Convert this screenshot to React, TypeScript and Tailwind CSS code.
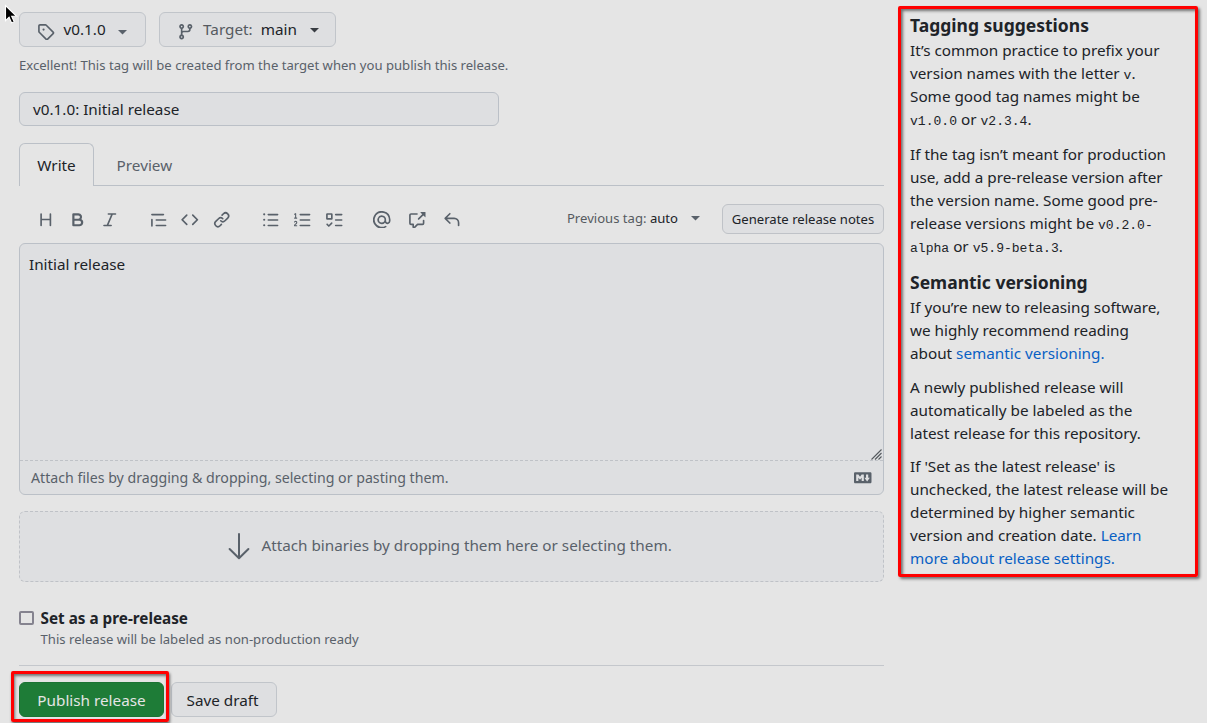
import React from "react";

const ICONS = {
  tag: "M1 7.775V2.75C1 1.784 1.784 1 2.75 1h5.025c.464 0 .91.184 1.238.513l6.25 6.25a1.75 1.75 0 0 1 0 2.474l-5.026 5.026a1.75 1.75 0 0 1-2.474 0l-6.25-6.25A1.752 1.752 0 0 1 1 7.775Zm1.5 0c0 .066.026.13.073.177l6.25 6.25a.25.25 0 0 0 .354 0l5.025-5.025a.25.25 0 0 0 0-.354l-6.25-6.25a.25.25 0 0 0-.177-.073H2.75a.25.25 0 0 0-.25.25ZM6 5a1 1 0 1 1 0 2 1 1 0 0 1 0-2Z",
  branch: "M9.5 3.25a2.25 2.25 0 1 1 3 2.122V6A2.5 2.5 0 0 1 10 8.5H6a1 1 0 0 0-1 1v1.128a2.251 2.251 0 1 1-1.5 0V5.372a2.25 2.25 0 1 1 1.5 0v1.836A2.493 2.493 0 0 1 6 7h4a1 1 0 0 0 1-1v-.628A2.25 2.25 0 0 1 9.5 3.25Zm-6 0a.75.75 0 1 0 1.5 0 .75.75 0 0 0-1.5 0Zm8.25-.75a.75.75 0 1 0 0 1.5.75.75 0 0 0 0-1.5ZM4.25 12a.75.75 0 1 0 0 1.5.75.75 0 0 0 0-1.5Z",
  heading: "M3.75 2a.75.75 0 0 1 .75.75V7h7V2.75a.75.75 0 0 1 1.5 0v10.5a.75.75 0 0 1-1.5 0V8.5h-7v4.75a.75.75 0 0 1-1.5 0V2.75A.75.75 0 0 1 3.75 2Z",
  bold: "M4 2h4.5a3.501 3.501 0 0 1 2.852 5.53A3.499 3.499 0 0 1 9.5 14H4a1 1 0 0 1-1-1V3a1 1 0 0 1 1-1Zm1 7v3h4.5a1.5 1.5 0 0 0 0-3Zm3.5-2a1.5 1.5 0 0 0 0-3H5v3Z",
  italic: "M6 2.75A.75.75 0 0 1 6.75 2h6.5a.75.75 0 0 1 0 1.5h-2.505l-3.858 9H9.25a.75.75 0 0 1 0 1.5h-6.5a.75.75 0 0 1 0-1.5h2.505l3.858-9H6.75A.75.75 0 0 1 6 2.75Z",
  quote: "M1.75 2.5h10.5a.75.75 0 0 1 0 1.5H1.75a.75.75 0 0 1 0-1.5Zm4 5h8.5a.75.75 0 0 1 0 1.5h-8.5a.75.75 0 0 1 0-1.5Zm0 5h8.5a.75.75 0 0 1 0 1.5h-8.5a.75.75 0 0 1 0-1.5ZM2.5 7.75v6a.75.75 0 0 1-1.5 0v-6a.75.75 0 0 1 1.5 0Z",
  code: "m11.28 3.22 4.25 4.25a.75.75 0 0 1 0 1.06l-4.25 4.25a.749.749 0 0 1-1.275-.326.749.749 0 0 1 .215-.734L13.94 8l-3.72-3.72a.749.749 0 0 1 .326-1.275.749.749 0 0 1 .734.215Zm-6.56 0a.751.751 0 0 1 1.042.018.751.751 0 0 1 .018 1.042L2.06 8l3.72 3.72a.749.749 0 0 1-.326 1.275.749.749 0 0 1-.734-.215L.47 8.53a.75.75 0 0 1 0-1.06Z",
  link: "m7.775 3.275 1.25-1.25a3.5 3.5 0 1 1 4.95 4.95l-2.5 2.5a3.5 3.5 0 0 1-4.95 0 .751.751 0 0 1 .018-1.042.751.751 0 0 1 1.042-.018 1.998 1.998 0 0 0 2.83 0l2.5-2.5a2.002 2.002 0 0 0-2.83-2.83l-1.25 1.25a.751.751 0 0 1-1.042-.018.751.751 0 0 1-.018-1.042Zm-4.69 9.64a1.998 1.998 0 0 0 2.83 0l1.25-1.25a.751.751 0 0 1 1.042.018.751.751 0 0 1 .018 1.042l-1.25 1.25a3.5 3.5 0 1 1-4.95-4.95l2.5-2.5a3.5 3.5 0 0 1 4.95 0 .751.751 0 0 1-.018 1.042.751.751 0 0 1-1.042.018 1.998 1.998 0 0 0-2.83 0l-2.5 2.5a1.998 1.998 0 0 0 0 2.83Z",
  ul: "M5.75 2.5h8.5a.75.75 0 0 1 0 1.5h-8.5a.75.75 0 0 1 0-1.5Zm0 5h8.5a.75.75 0 0 1 0 1.5h-8.5a.75.75 0 0 1 0-1.5Zm0 5h8.5a.75.75 0 0 1 0 1.5h-8.5a.75.75 0 0 1 0-1.5ZM2 14a1 1 0 1 1 0-2 1 1 0 0 1 0 2Zm1-6a1 1 0 1 1-2 0 1 1 0 0 1 2 0ZM2 4a1 1 0 1 1 0-2 1 1 0 0 1 0 2Z",
  ol: "M5 3.25a.75.75 0 0 1 .75-.75h8.5a.75.75 0 0 1 0 1.5h-8.5A.75.75 0 0 1 5 3.25Zm0 5a.75.75 0 0 1 .75-.75h8.5a.75.75 0 0 1 0 1.5h-8.5A.75.75 0 0 1 5 8.25Zm0 5a.75.75 0 0 1 .75-.75h8.5a.75.75 0 0 1 0 1.5h-8.5a.75.75 0 0 1-.75-.75ZM.924 10.32a.5.5 0 0 1-.851-.525l.001-.001.001-.002.002-.004.007-.011c.097-.144.215-.273.348-.384.228-.19.588-.392 1.068-.392.468 0 .858.181 1.126.484.259.294.377.673.377 1.038 0 .987-.686 1.495-1.156 1.845l-.047.035c-.303.225-.522.4-.654.597h1.357a.5.5 0 0 1 0 1H.5a.5.5 0 0 1-.5-.5c0-1.005.692-1.52 1.167-1.875l.035-.025c.531-.396.8-.625.8-1.078a.57.57 0 0 0-.128-.376C1.806 10.068 1.695 10 1.5 10a.658.658 0 0 0-.429.163.835.835 0 0 0-.144.153ZM2.003 2.5V6h.503a.5.5 0 0 1 0 1H.5a.5.5 0 0 1 0-1h.503V3.308l-.28.14a.5.5 0 0 1-.446-.895l1.003-.5a.5.5 0 0 1 .723.447Z",
  tasks: "M2 2h4a1 1 0 0 1 1 1v4a1 1 0 0 1-1 1H2a1 1 0 0 1-1-1V3a1 1 0 0 1 1-1Zm4.655 8.595a.75.75 0 0 1 0 1.06L4.03 14.28a.75.75 0 0 1-1.06 0l-1.5-1.5a.749.749 0 0 1 .326-1.275.749.749 0 0 1 .734.215l.97.97 2.095-2.095a.75.75 0 0 1 1.06 0ZM9.75 2.5h5.5a.75.75 0 0 1 0 1.5h-5.5a.75.75 0 0 1 0-1.5Zm0 5h5.5a.75.75 0 0 1 0 1.5h-5.5a.75.75 0 0 1 0-1.5Zm0 5h5.5a.75.75 0 0 1 0 1.5h-5.5a.75.75 0 0 1 0-1.5Zm-7.25-9v3h3v-3Z",
  mention: "M4.75 2.37a6.501 6.501 0 0 0 6.5 11.26.75.75 0 0 1 .75 1.298A7.999 7.999 0 0 1 .989 4.148 8 8 0 0 1 16 7.75v1.5a2.75 2.75 0 0 1-5.072 1.475 3.999 3.999 0 0 1-6.65-4.19A4 4 0 0 1 12 8v1.25a1.25 1.25 0 0 0 2.5 0V7.867a6.5 6.5 0 0 0-9.75-5.496ZM10.5 8a2.5 2.5 0 1 0-5 0 2.5 2.5 0 0 0 5 0Z",
  crossRef: "M2.75 3.5a.25.25 0 0 0-.25.25v7.5c0 .138.112.25.25.25h2a.75.75 0 0 1 .75.75v2.19l2.72-2.72a.749.749 0 0 1 .53-.22h4.5a.25.25 0 0 0 .25-.25v-2.5a.75.75 0 0 1 1.5 0v2.5A1.75 1.75 0 0 1 13.25 13H9.06l-2.573 2.573A1.458 1.458 0 0 1 4 14.543V13H2.75A1.75 1.75 0 0 1 1 11.25v-7.5C1 2.784 1.784 2 2.75 2h5.5a.75.75 0 0 1 0 1.5ZM16 1.25v4.146a.25.25 0 0 1-.427.177L14.03 4.03l-3.75 3.75a.749.749 0 0 1-1.275-.326.749.749 0 0 1 .215-.734l3.75-3.75-1.543-1.543A.25.25 0 0 1 11.604 1h4.146a.25.25 0 0 1 .25.25Z",
  reply: "M6.78 1.97a.75.75 0 0 1 0 1.06L3.81 6h6.44A4.75 4.75 0 0 1 15 10.75v2.5a.75.75 0 0 1-1.5 0v-2.5a3.25 3.25 0 0 0-3.25-3.25H3.81l2.97 2.97a.749.749 0 0 1-.326 1.275.749.749 0 0 1-.734-.215L1.47 7.28a.75.75 0 0 1 0-1.06l4.25-4.25a.75.75 0 0 1 1.06 0Z",
  markdown: "M14.85 3c.63 0 1.15.52 1.14 1.15v7.7c0 .63-.51 1.15-1.15 1.15H1.15C.52 13 0 12.48 0 11.84V4.15C0 3.52.52 3 1.15 3ZM9 11V5H7L5.5 7 4 5H2v6h2V8l1.5 1.92L7 8v3Zm2.99.5L14.5 8H13V5h-2v3H9.5Z",
};

type IconName = keyof typeof ICONS;

function Icon({ name, className = "" }: { name: IconName; className?: string }) {
  return (
    <svg viewBox="0 0 16 16" fill="currentColor" className={`size-[17.5px] shrink-0 ${className}`}>
      <path fillRule="evenodd" d={ICONS[name]} />
    </svg>
  );
}

function Caret({ className = "" }: { className?: string }) {
  return (
    <svg viewBox="0 0 9 5" fill="currentColor" className={`h-[5px] w-[9px] shrink-0 ${className}`}>
      <path d="M0 0h9L4.5 4.6Z" />
    </svg>
  );
}

function Mono({ children }: { children: React.ReactNode }) {
  return <code className="font-['Liberation_Mono',monospace] text-[13.05px] leading-none">{children}</code>;
}

const TOOLBAR: { name: IconName; gap: string }[] = [
  { name: "heading", gap: "ml-[17.5px]" },
  { name: "bold", gap: "ml-[14.7px]" },
  { name: "italic", gap: "ml-[14.7px]" },
  { name: "quote", gap: "ml-[31.3px]" },
  { name: "code", gap: "ml-[14px]" },
  { name: "link", gap: "ml-[14.3px]" },
  { name: "ul", gap: "ml-[31.7px]" },
  { name: "ol", gap: "ml-[14.3px]" },
  { name: "tasks", gap: "ml-[14px]" },
  { name: "mention", gap: "ml-[30.5px]" },
  { name: "crossRef", gap: "ml-[17.5px]" },
  { name: "reply", gap: "ml-[17.5px]" },
];

export default function App() {
  return (
    <div className="relative flex h-[723px] w-[1207px] overflow-hidden bg-[#e5e5e5] font-['Noto_Sans',sans-serif] text-[15.28px] leading-[22.92px] whitespace-nowrap text-[#202328]">
      <main className="ml-[19px] flex w-[865px] shrink-0 flex-col pt-3">
        <div className="flex h-[35px] gap-[13px]">
          <button className="flex w-[127px] items-center rounded-md border border-[#c1c5ca] bg-[#dedfe1] pl-[17px]">
            <Icon name="tag" className="mt-[4px] text-[#59616a]" />
            <span className="ml-[9px]">v0.1.0</span>
            <Caret className="mt-[6px] ml-[12px] text-[#59616a]" />
          </button>
          <button className="flex w-[177px] items-center rounded-md border border-[#c1c5ca] bg-[#dedfe1] pl-[17px]">
            <Icon name="branch" className="mt-[4px] text-[#59616a]" />
            <span className="ml-[8.6px] text-[#555a60]">Target:</span>
            <span className="ml-[8px]">main</span>
            <Caret className="mt-[2px] ml-[12.7px] text-[#383c42]" />
          </button>
        </div>
        <p className="mt-[8px] mb-px h-5 text-[13.1px] leading-5 text-[#59616a]">
          Excellent! This tag will be created from the target when you publish this release.
        </p>
        <div className="mt-4 flex h-[34px] w-[480px] items-center rounded-md border border-[#bbc0c7] bg-[#dedfe1] pl-[13px]">
          v0.1.0: Initial release
        </div>

        <div className="mt-[17px] flex h-[43px]">
          <div className="flex w-[75px] items-center justify-center rounded-t-md border border-b-0 border-[#bbc0c7] pb-0">
            <span className="mt-px">Write</span>
          </div>
          <div className="flex flex-1 items-center border-b border-[#bbc0c7] pl-[22.6px] text-[#59616a]">
            <span className="mt-[3px]">Preview</span>
          </div>
        </div>

        <div className="flex h-[57px] items-center pt-[10px] text-[#59616a]">
          {TOOLBAR.map((item) => (
            <Icon key={item.name} name={item.name} className={item.gap} />
          ))}
          <div className="ml-auto flex items-center">
            <span className="mb-[3px] text-[13.1px] leading-5 text-[#555a60]">
              Previous tag: <span className="text-[#202328]">auto</span>
            </span>
            <Caret className="mb-[2px] ml-[13px]" />
            <button className="mb-px ml-[22px] flex h-[30px] w-[162px] items-center justify-center rounded-md border border-[#bfc2c7] bg-[#dedfe1] text-[13.1px] text-[#202328]">
              Generate release notes
            </button>
          </div>
        </div>

        <section className="flex h-[252px] flex-col rounded-md border border-[#bbc0c7] bg-[#dedfe1]">
          <div className="relative h-[217px] border-b border-dashed border-[#bfc2c7] px-[9px] pt-[9px]">
            Initial release
            <svg viewBox="0 0 11 11" className="absolute right-px bottom-0 size-[11px]" fill="none" stroke="#55595e">
              <path d="M.5 10.5l10-10M4 10.5l6.5-6.5M7.5 10.5l3-3" strokeWidth="1.1" />
            </svg>
          </div>
          <div className="flex flex-1 items-center justify-between pr-[11.5px] pl-[11px] text-[14.18px] text-[#59616a]">
            <span className="mt-[2px]">Attach files by dragging &amp; dropping, selecting or pasting them.</span>
            <Icon name="markdown" />
          </div>
        </section>

        <section className="mt-4 flex h-[71px] items-center rounded-md border border-dashed border-[#bfc2c7] bg-[#dedfe1] pl-[208px] text-[#59616a]">
          <svg viewBox="0 0 22 27" className="h-[27px] w-[22px] shrink-0" fill="none" stroke="currentColor" strokeWidth="2">
            <path d="M11 1v24M1.6 16l9.4 9.3L20.4 16" strokeLinecap="round" strokeLinejoin="round" />
          </svg>
          <span className="mb-[2px] ml-[11.4px]">Attach binaries by dropping them here or selecting them.</span>
        </section>

        <div className="mt-[25px] flex h-[58px] border-b border-transparent">
          <span className="mt-[4px] h-[14px] w-[15px] shrink-0 rounded-[2px] border-2 border-[#85838f]" />
          <div className="ml-[6.6px]">
            <p className="font-bold">Set as a pre-release</p>
            <p className="-mt-px text-[13.1px] leading-5 text-[#59616a]">This release will be labeled as non-production ready</p>
          </div>
        </div>
        <div className="h-px bg-[#c4c7cc]" />
        <div className="mt-4 flex h-[35px] gap-[7px]">
          <button className="relative w-[145px] rounded-md border border-[#1b7333] bg-[#1e7c37] pt-[2px] text-[#e5e5e5]">
            Publish release
            <span className="absolute -top-3 -left-[9px] h-[51px] w-[158px] rounded-[2px] border-3 border-[#ff0000] shadow-[1px_2px_3px_rgba(0,0,0,.55),inset_1px_2px_3px_rgba(0,0,0,.5)]" />
          </button>
          <button className="w-[106px] rounded-md border border-[#c1c5ca] bg-[#dedfe1] pt-[2px] pr-[8px] pl-[5px]">Save draft</button>
        </div>
      </main>

      <aside className="mt-[6px] ml-[14px] h-[571px] w-[300px] shrink-0 rounded-[2px] border-3 border-[#ff0000] pt-[3px] pl-[9px] shadow-[2px_2px_3px_rgba(0,0,0,.5),inset_2px_2px_3px_rgba(0,0,0,.5)]">
        <h4 className="text-[17.5px] leading-[27px] font-bold">Tagging suggestions</h4>
        <p className="mb-[12.2px]">
          It’s common practice to prefix your<br />version names with the letter <Mono>v</Mono>.<br />
          Some good tag names might be<br /><Mono>v1.0.0</Mono> or <Mono>v2.3.4</Mono>.
        </p>
        <p className="mb-[11.5px]">
          If the tag isn’t meant for production<br />use, add a pre-release version after<br />
          the version name. Some good pre-<br />release versions might be <Mono>v0.2.0-</Mono><br />
          <Mono>alpha</Mono> or <Mono>v5.9-beta.3</Mono>.
        </p>
        <h4 className="text-[17.5px] leading-[27px] font-bold">Semantic versioning</h4>
        <p className="mb-[11.1px]">
          If you’re new to releasing software,<br />we highly recommend reading<br />
          about <a className="text-[#0860c4]">semantic versioning.</a>
        </p>
        <p className="mb-[10.6px]">
          A newly published release will<br />automatically be labeled as the<br />latest release for this repository.
        </p>
        <p>
          If 'Set as the latest release' is<br />unchecked, the latest release will be<br />
          determined by higher semantic<br />version and creation date. <a className="text-[#0860c4]">Learn<br />more about release settings.</a>
        </p>
      </aside>

      <svg viewBox="0 0 14 21" className="absolute top-[4px] left-[4px] h-[21px] w-[14px]">
        <path d="M1.5 1.5v15.2l3.6-3.4 2.5 5.6 2.6-1.1-2.5-5.5h4.9Z" fill="#000" stroke="#fff" strokeWidth="1.1" />
      </svg>
    </div>
  );
}
